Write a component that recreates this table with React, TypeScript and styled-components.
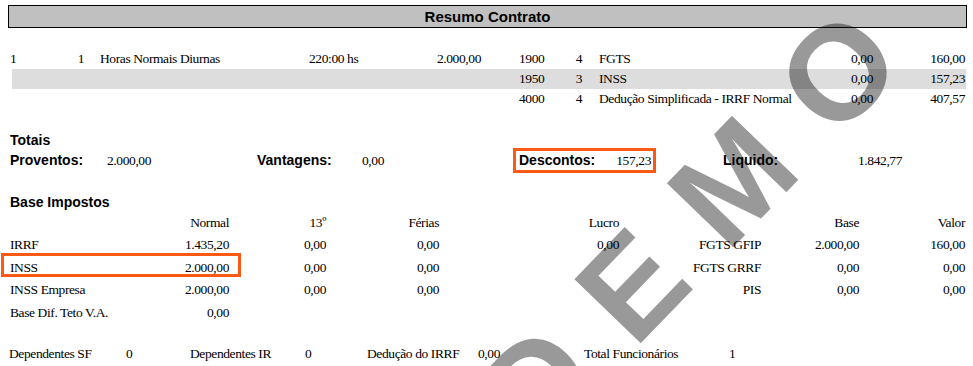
import React from "react";
import styled, { createGlobalStyle } from "styled-components";

const serif = `"Liberation Serif", "Times New Roman", serif`;
const sans = `"Liberation Sans", Arial, sans-serif`;
const ORANGE = "#fb5a14";

const GlobalStyle = createGlobalStyle`
  html, body { margin: 0; padding: 0; background: #ffffff; }
  body { width: 973px; height: 366px; overflow: hidden; }
`;

const Page = styled.div`
  position: relative;
  width: 973px;
  height: 366px;
  box-sizing: border-box;
  padding: 5px 6px 0 8px;
  overflow: hidden;
  font-family: ${serif};
  font-size: 13.5px;
  letter-spacing: -0.4px;
  color: #000;
  white-space: nowrap;
`;

const TitleBar = styled.div`
  height: 23px;
  box-sizing: border-box;
  border: 1px solid #000;
  background: #c0c0c0;
  font: bold 15px/21px ${sans};
  letter-spacing: 0;
  text-align: center;
`;

const Lancamentos = styled.div`
  margin: 21px 1px 0;
`;

const LancRow = styled.div<{ $shaded?: boolean }>`
  display: grid;
  grid-template-columns: 41px 34px 225px 111px 61px 79px 22px 218px 73px 93px;
  height: 20px;
  line-height: 20px;
  background: ${(p) =>
    p.$shaded
      ? "linear-gradient(#dddddd, #dddddd) 3px 0 / calc(100% - 3px) 100% no-repeat"
      : "none"};
`;

const Cell = styled.span<{ $right?: boolean; $pl?: number; $pr?: number }>`
  text-align: ${(p) => (p.$right ? "right" : "left")};
  padding-left: ${(p) => p.$pl ?? 0}px;
  padding-right: ${(p) => p.$pr ?? 0}px;
`;

const SectionTitle = styled.div<{ $mt: number }>`
  margin-top: ${(p) => p.$mt}px;
  padding-left: 2px;
  font: bold 14px/15px ${sans};
  letter-spacing: 0;
`;

const TotalsRow = styled.div`
  display: grid;
  grid-template-columns: 99px 150px 105px 151px 143px 67px 135px 109px;
  height: 25px;
  align-items: center;
  line-height: 21px;
`;

const Label = styled.span<{ $pl?: number }>`
  font: bold 14px/21px ${sans};
  letter-spacing: 0;
  padding-left: ${(p) => p.$pl ?? 0}px;
`;

const Value = styled.span`
  line-height: 21px;
`;

const HighlightCell = styled.div`
  display: flex;
  justify-content: space-between;
  height: 25px;
  box-sizing: border-box;
  border: 3px solid ${ORANGE};
  padding: 0 2px 0 3px;
  line-height: 19px;

  & > span {
    line-height: 19px;
  }
`;

const BaseTable = styled.div`
  margin: 1.5px 1px 0;
`;

const BaseRow = styled.div`
  position: relative;
  display: grid;
  grid-template-columns: 141px 79px 97px 113px 180px 142px 98px 107px;
  height: 22.5px;
  line-height: 22.5px;
`;

const RowHighlight = styled.div`
  position: absolute;
  left: -8px;
  top: -3.5px;
  width: 240px;
  height: 24px;
  box-sizing: border-box;
  border: 3px solid ${ORANGE};
  pointer-events: none;
`;

const Footer = styled.div`
  display: grid;
  grid-template-columns: 118px 64px 115px 62px 111px 106px 145px 238px;
  margin-top: 19.5px;
  height: 20px;
  line-height: 20px;
`;

const Watermark = styled.div`
  position: absolute;
  left: 689px;
  top: 227px;
  transform: translate(-50%, -50%) rotate(-46deg);
  font: bold 134px/1 ${sans};
  letter-spacing: 44px;
  padding-left: 44px;
  color: rgba(0, 0, 0, 0.4);
  white-space: nowrap;
  pointer-events: none;
`;

type Lanc = {
  a: string;
  b: string;
  desc: string;
  ref: string;
  val: string;
  code: string;
  tipo: string;
  desc2: string;
  ref2: string;
  val2: string;
};

const lancamentos: Lanc[] = [
  { a: "1", b: "1", desc: "Horas Normais Diurnas", ref: "220:00 hs", val: "2.000,00", code: "1900", tipo: "4", desc2: "FGTS", ref2: "0,00", val2: "160,00" },
  { a: "", b: "", desc: "", ref: "", val: "", code: "1950", tipo: "3", desc2: "INSS", ref2: "0,00", val2: "157,23" },
  { a: "", b: "", desc: "", ref: "", val: "", code: "4000", tipo: "4", desc2: "Dedução Simplificada - IRRF Normal", ref2: "0,00", val2: "407,57" },
];

type BaseLine = {
  label: string;
  normal: string;
  decimo: string;
  ferias: string;
  lucro: string;
  label2: string;
  base: string;
  valor: string;
  highlight?: boolean;
};

const baseRows: BaseLine[] = [
  { label: "", normal: "Normal", decimo: "13º", ferias: "Férias", lucro: "Lucro", label2: "", base: "Base", valor: "Valor" },
  { label: "IRRF", normal: "1.435,20", decimo: "0,00", ferias: "0,00", lucro: "0,00", label2: "FGTS GFIP", base: "2.000,00", valor: "160,00" },
  { label: "INSS", normal: "2.000,00", decimo: "0,00", ferias: "0,00", lucro: "", label2: "FGTS GRRF", base: "0,00", valor: "0,00", highlight: true },
  { label: "INSS Empresa", normal: "2.000,00", decimo: "0,00", ferias: "0,00", lucro: "", label2: "PIS", base: "0,00", valor: "0,00" },
  { label: "Base Dif. Teto V.A.", normal: "0,00", decimo: "", ferias: "", lucro: "", label2: "", base: "", valor: "" },
];

export default function App() {
  return (
    <>
      <GlobalStyle />
      <Page>
        <TitleBar>Resumo Contrato</TitleBar>

        <Lancamentos>
          {lancamentos.map((l, i) => (
            <LancRow key={i} $shaded={i === 1}>
              <Cell $pl={1}>{l.a}</Cell>
              <Cell $right>{l.b}</Cell>
              <Cell $pl={16}>{l.desc}</Cell>
              <Cell>{l.ref}</Cell>
              <Cell $right>{l.val}</Cell>
              <Cell $pl={38}>{l.code}</Cell>
              <Cell $right>{l.tipo}</Cell>
              <Cell $pl={17}>{l.desc2}</Cell>
              <Cell $right>{l.ref2}</Cell>
              <Cell $right $pr={1}>{l.val2}</Cell>
            </LancRow>
          ))}
        </Lancamentos>

        <SectionTitle $mt={24}>Totais</SectionTitle>
        <TotalsRow>
          <Label $pl={2}>Proventos:</Label>
          <Value>2.000,00</Value>
          <Label>Vantagens:</Label>
          <Value>0,00</Value>
          <HighlightCell>
            <Label>Descontos:</Label>
            <Value>157,23</Value>
          </HighlightCell>
          <span />
          <Label>Liquido:</Label>
          <Value>1.842,77</Value>
        </TotalsRow>

        <SectionTitle $mt={22}>Base Impostos</SectionTitle>
        <BaseTable>
          {baseRows.map((r, i) => (
            <BaseRow key={i}>
              <Cell $pl={1}>{r.label}</Cell>
              <Cell $right>{r.normal}</Cell>
              <Cell $right>{r.decimo}</Cell>
              <Cell $right>{r.ferias}</Cell>
              <Cell $right>{r.lucro}</Cell>
              <Cell $right>{r.label2}</Cell>
              <Cell $right>{r.base}</Cell>
              <Cell $right $pr={1}>{r.valor}</Cell>
              {r.highlight && <RowHighlight />}
            </BaseRow>
          ))}
        </BaseTable>

        <Footer>
          <Cell $pl={1}>Dependentes SF</Cell>
          <Cell>0</Cell>
          <Cell>Dependentes IR</Cell>
          <Cell>0</Cell>
          <Cell>Dedução do IRRF</Cell>
          <Cell>0,00</Cell>
          <Cell>Total Funcionários</Cell>
          <Cell>1</Cell>
        </Footer>

        <Watermark>DEMO</Watermark>
      </Page>
    </>
  );
}
